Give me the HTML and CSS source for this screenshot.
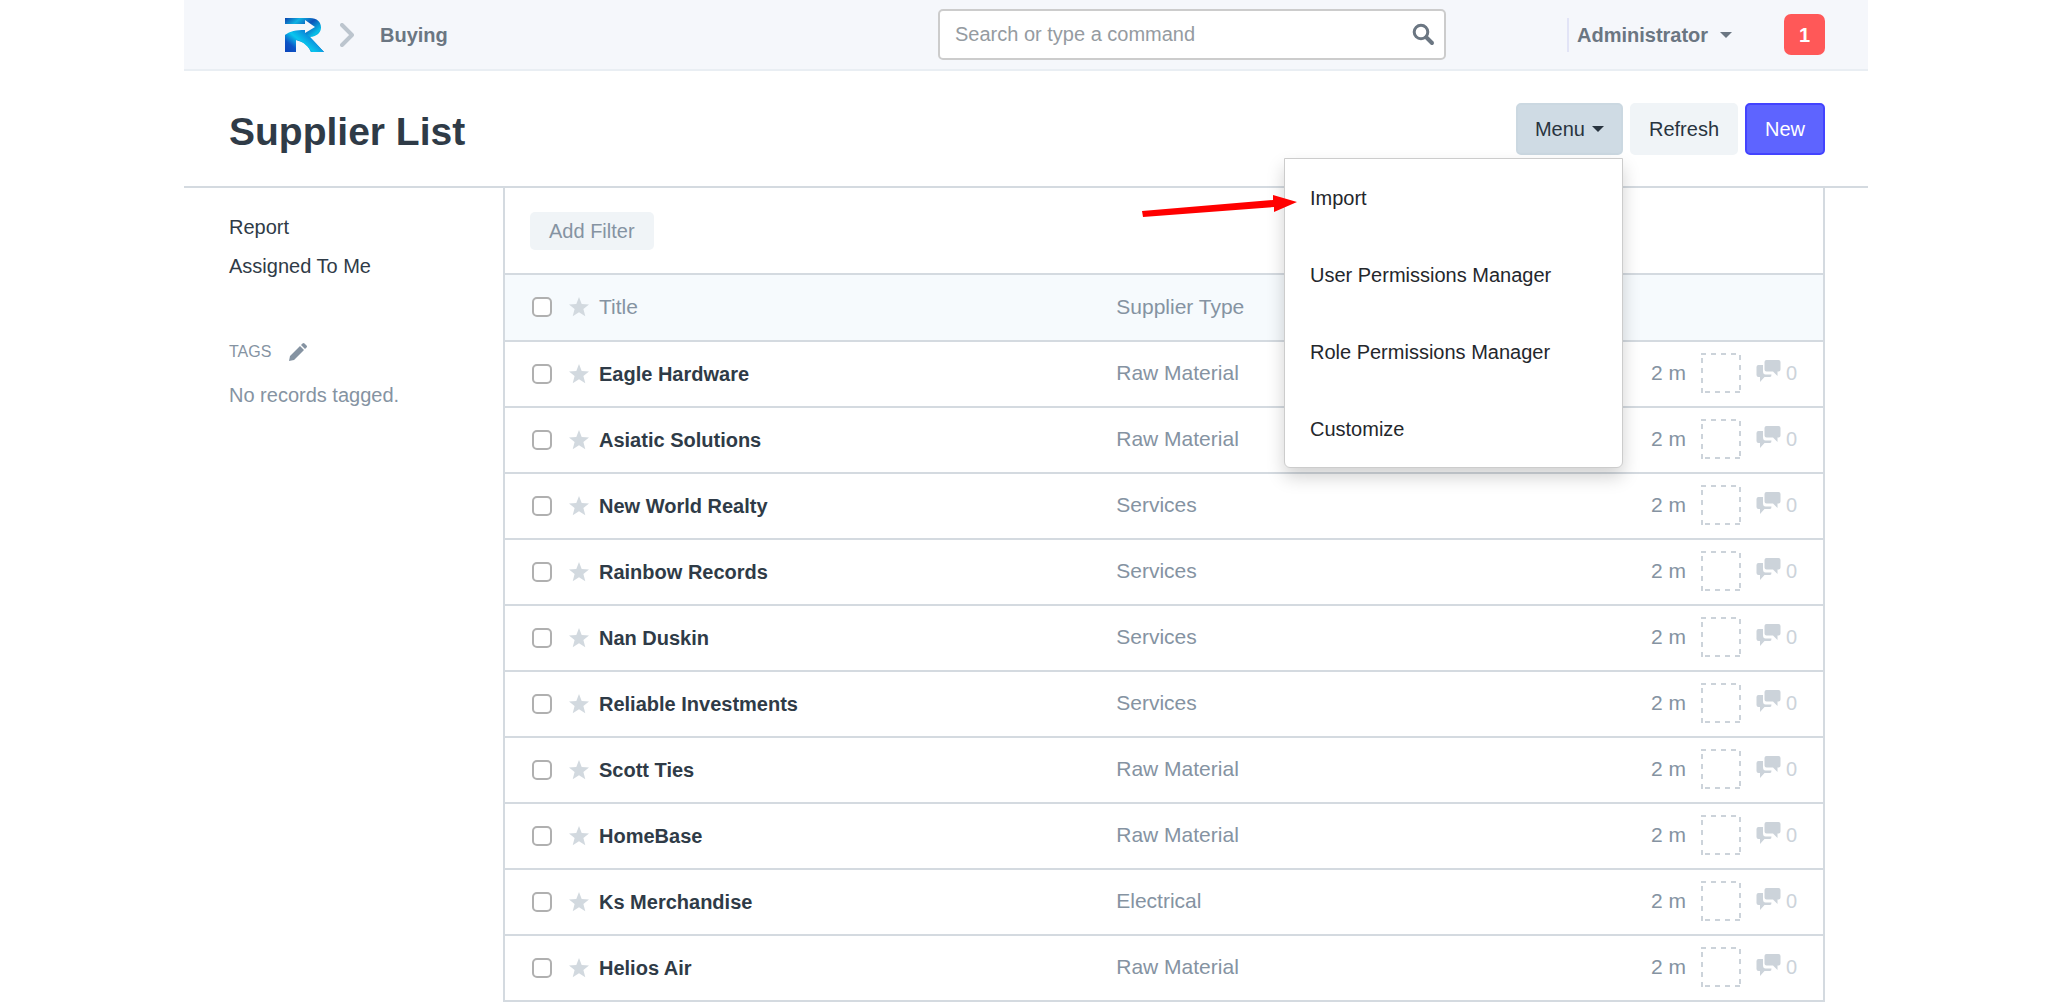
FILE: index.html
```html
<!DOCTYPE html>
<html lang="en">
<head>
<meta charset="utf-8">
<meta name="viewport" content="width=device-width, initial-scale=1">
<title>Supplier List</title>
<link rel="stylesheet" href="styles.css">
</head>
<body>
<svg class="sprite" width="0" height="0" aria-hidden="true">
  <symbol id="star" viewBox="0 0 20 20"><path d="M10 0l2.7 6.9 7.3.5-5.6 4.700 1.900 7.200L10 15.300 3.700 19.300l1.900-7.200L0 7.400l7.300-.5z"/></symbol>
  <symbol id="comments" viewBox="0 0 25 22"><path d="M10.500 0h12q2 0 2 2v7.500q0 2-2 2h-1v4.500L17 11.500h-6.500q-2 0-2-2V2q0-2 2-2z"/><path d="M7 5H2.500Q.5 5 .5 7v8q0 2 2 2h1.500v5L8.500 17H14q1.500 0 1.500-2.500H9.500Q7 14.500 7 11z"/></symbol>
  <symbol id="avatar" viewBox="0 0 40 40"><path d="M0 1h5M10 1h5M20 1h5M30 1h5M4 39h5M14 39h5M24 39h5M34 39h5M1 5v5M1 15v5M1 25v5M1 35v5M39 2v5M39 12v5M39 22v5M39 32v5" fill="none" stroke="currentColor" stroke-width="2"/></symbol>
</svg>
<div class="app">
  <header class="navbar">
    <nav class="crumbs" aria-label="Breadcrumb">
      <a class="logo" href="#" aria-label="Home">
        <svg width="39" height="34" viewBox="0 0 39 34">
          <defs>
            <linearGradient id="bowl" x1="0" y1="0" x2="1" y2="1"><stop offset="0" stop-color="#0b43ae"/><stop offset=".2" stop-color="#0fb2e2"/><stop offset=".4" stop-color="#0b52b8"/><stop offset=".62" stop-color="#07bfe8"/><stop offset="1" stop-color="#0a4cc0"/></linearGradient>
            <linearGradient id="leg" x1="0" y1="1" x2="1" y2=".3"><stop offset="0" stop-color="#0a44bb"/><stop offset=".25" stop-color="#0d55c6"/><stop offset=".5" stop-color="#08c6ee"/><stop offset=".75" stop-color="#0a8fdc"/><stop offset="1" stop-color="#0a62c4"/></linearGradient>
          </defs>
          <path fill="url(#bowl)" d="M0 0h25c7 0 11 4 11 9.500 0 5-4 9-11 9.500L39 34H26c-2-5-7-10-15-12v12H0V17L20 12v3l10-6-10-7v4H0z"/>
          <path fill="url(#leg)" d="M0 17c5-4 11-5 20-5v3c2 2 3 3 5 4l14 15H26c-2-5-7-11-15-12v12H0z"/>
        </svg>
      </a>
      <svg class="chevron" width="14" height="24" viewBox="0 0 14 24" aria-hidden="true"><path d="M2 2l10 10L2 22" fill="none" stroke="currentColor" stroke-width="4" stroke-linecap="round" stroke-linejoin="round"/></svg>
      <a class="nav-link" href="#">Buying</a>
    </nav>
    <form class="search" role="search">
      <input class="search-input" type="text" placeholder="Search or type a command" aria-label="Search or type a command">
      <svg class="search-icon" width="23" height="23" viewBox="0 0 22 23" aria-hidden="true"><circle cx="8.500" cy="9" r="6.800" fill="none" stroke="currentColor" stroke-width="3"/><path d="M14 14.500l5.500 5.500" stroke="currentColor" stroke-width="4" stroke-linecap="round"/></svg>
    </form>
    <div class="account">
      <a class="nav-link user" href="#">Administrator <span class="caret"></span></a>
      <button class="badge" type="button" aria-label="1 notification">1</button>
    </div>
  </header>

  <div class="page-head">
    <h1 class="page-title">Supplier List</h1>
    <div class="actions">
      <div class="menu">
        <button class="btn btn-open" type="button" aria-expanded="true">Menu <span class="caret"></span></button>
        <ul class="dropdown">
          <li><a href="#">Import</a></li>
          <li><a href="#">User Permissions Manager</a></li>
          <li><a href="#">Role Permissions Manager</a></li>
          <li><a href="#">Customize</a></li>
        </ul>
        <svg class="pointer" width="156" height="24" viewBox="0 0 156 24" aria-hidden="true"><path fill="#f00" d="M0 16L131 5V0l24 7-23 10v-5L1 22z"/></svg>
      </div>
      <button class="btn" type="button">Refresh</button>
      <button class="btn btn-primary" type="button">New</button>
    </div>
  </div>

  <div class="page-body">
    <aside class="sidebar">
      <a class="side-link" href="#">Report</a>
      <a class="side-link" href="#">Assigned To Me</a>
      <div class="tags">
        <h2 class="tags-title">TAGS</h2>
        <svg width="18" height="18" viewBox="0 0 18 18" aria-hidden="true"><path d="M0 18l1-5L11 3l4 4L5 17zM12 2l1.500-1.500Q14.500-.5 15.500.5l2 2q1 1 0 2L16 6z"/></svg>
      </div>
      <p class="tags-empty">No records tagged.</p>
    </aside>

    <main class="list">
      <div class="filters"><button class="btn-filter" type="button">Add Filter</button></div>
      <table class="records">
        <thead>
          <tr>
            <th class="col-title" scope="col"><div class="cell"><input class="check" type="checkbox" aria-label="Select all"><svg class="star"><use href="#star"/></svg>Title</div></th>
            <th class="col-type" scope="col">Supplier Type</th>
            <th class="col-meta"></th>
          </tr>
        </thead>
        <tbody>
          <tr><td><label class="cell"><input class="check" type="checkbox"><svg class="star"><use href="#star"/></svg>Eagle Hardware</label></td><td class="col-type">Raw Material</td><td><div class="meta"><span class="age">2 m</span><svg class="avatar"><use href="#avatar"/></svg><svg class="comments"><use href="#comments"/></svg>0</div></td></tr>
          <tr><td><label class="cell"><input class="check" type="checkbox"><svg class="star"><use href="#star"/></svg>Asiatic Solutions</label></td><td class="col-type">Raw Material</td><td><div class="meta"><span class="age">2 m</span><svg class="avatar"><use href="#avatar"/></svg><svg class="comments"><use href="#comments"/></svg>0</div></td></tr>
          <tr><td><label class="cell"><input class="check" type="checkbox"><svg class="star"><use href="#star"/></svg>New World Realty</label></td><td class="col-type">Services</td><td><div class="meta"><span class="age">2 m</span><svg class="avatar"><use href="#avatar"/></svg><svg class="comments"><use href="#comments"/></svg>0</div></td></tr>
          <tr><td><label class="cell"><input class="check" type="checkbox"><svg class="star"><use href="#star"/></svg>Rainbow Records</label></td><td class="col-type">Services</td><td><div class="meta"><span class="age">2 m</span><svg class="avatar"><use href="#avatar"/></svg><svg class="comments"><use href="#comments"/></svg>0</div></td></tr>
          <tr><td><label class="cell"><input class="check" type="checkbox"><svg class="star"><use href="#star"/></svg>Nan Duskin</label></td><td class="col-type">Services</td><td><div class="meta"><span class="age">2 m</span><svg class="avatar"><use href="#avatar"/></svg><svg class="comments"><use href="#comments"/></svg>0</div></td></tr>
          <tr><td><label class="cell"><input class="check" type="checkbox"><svg class="star"><use href="#star"/></svg>Reliable Investments</label></td><td class="col-type">Services</td><td><div class="meta"><span class="age">2 m</span><svg class="avatar"><use href="#avatar"/></svg><svg class="comments"><use href="#comments"/></svg>0</div></td></tr>
          <tr><td><label class="cell"><input class="check" type="checkbox"><svg class="star"><use href="#star"/></svg>Scott Ties</label></td><td class="col-type">Raw Material</td><td><div class="meta"><span class="age">2 m</span><svg class="avatar"><use href="#avatar"/></svg><svg class="comments"><use href="#comments"/></svg>0</div></td></tr>
          <tr><td><label class="cell"><input class="check" type="checkbox"><svg class="star"><use href="#star"/></svg>HomeBase</label></td><td class="col-type">Raw Material</td><td><div class="meta"><span class="age">2 m</span><svg class="avatar"><use href="#avatar"/></svg><svg class="comments"><use href="#comments"/></svg>0</div></td></tr>
          <tr><td><label class="cell"><input class="check" type="checkbox"><svg class="star"><use href="#star"/></svg>Ks Merchandise</label></td><td class="col-type">Electrical</td><td><div class="meta"><span class="age">2 m</span><svg class="avatar"><use href="#avatar"/></svg><svg class="comments"><use href="#comments"/></svg>0</div></td></tr>
          <tr><td><label class="cell"><input class="check" type="checkbox"><svg class="star"><use href="#star"/></svg>Helios Air</label></td><td class="col-type">Raw Material</td><td><div class="meta"><span class="age">2 m</span><svg class="avatar"><use href="#avatar"/></svg><svg class="comments"><use href="#comments"/></svg>0</div></td></tr>
        </tbody>
      </table>
    </main>
  </div>
</div>
</body>
</html>
```

FILE: styles.css
```css
:root {
  --text: #2f3b47;
  --muted: #8593a2;
  --line: #d4dae0;
  --pale: #f0f4f7;
}

* { box-sizing: border-box; }

body {
  margin: 0;
  background: #fff;
  color: var(--text);
  font: 20px/24px "Liberation Sans", Arial, sans-serif;
}

a { color: inherit; text-decoration: none; }
button, input { font: inherit; margin: 0; }
button { cursor: pointer; }
svg { display: block; flex: none; fill: currentColor; }
.sprite { position: absolute; }

.app { max-width: 1684px; margin: 0 auto; }

/* Top bar */
.navbar {
  display: flex;
  align-items: center;
  min-height: 71px;
  padding: 0 43px 0 101px;
  background: #f5f7fb;
  border-bottom: 2px solid #e9eef3;
  color: #6b7682;
}
.crumbs { display: flex; align-items: center; margin-right: auto; }
.chevron { margin: 0 26px 0 16px; color: #bcc5ce; }
.nav-link { font-weight: bold; }

.search { position: relative; flex: 0 1 508px; margin-right: 121px; }
.search-input {
  width: 100%;
  height: 51px;
  padding: 0 50px 0 15px;
  border: 2px solid #ccc;
  border-radius: 5px;
  background: #fff;
  color: var(--text);
}
.search-input::placeholder { color: #959ba1; opacity: 1; }
.search-icon { position: absolute; right: 11px; top: 14px; }

.account { display: flex; align-items: center; justify-content: space-between; flex: 0 0 258px; }
.user {
  display: flex;
  align-items: center;
  gap: 12px;
  height: 34px;
  padding-left: 8px;
  border-left: 2px solid #e2e4f6;
}
.caret { border: 6px solid transparent; border-top-color: currentColor; border-bottom: 0; }
.badge {
  width: 41px;
  height: 41px;
  padding: 0;
  border: 0;
  border-radius: 7px;
  background: #ff5858;
  color: #fff;
  font-weight: bold;
}

/* Page heading */
.page-head {
  display: flex;
  align-items: center;
  justify-content: space-between;
  min-height: 117px;
  padding: 0 43px 0 45px;
  border-bottom: 2px solid var(--line);
}
.page-title { margin: 6px 0 0; font-size: 39px; line-height: 44px; }
.actions { display: flex; gap: 7px; }
.btn {
  display: flex;
  align-items: center;
  justify-content: center;
  gap: 7px;
  min-width: 80px;
  height: 52px;
  padding: 0 17px;
  border: 2px solid var(--pale);
  border-radius: 5px;
  background: var(--pale);
  color: #29343f;
}
.btn-open { border-color: #cbd8e1; background: #cfdbe4; }
.btn-primary { border-color: #4343ff; background: #5e64ff; color: #fff; }

.menu { position: relative; }
.dropdown {
  position: absolute;
  z-index: 1;
  top: 55px;
  right: 0;
  width: 339px;
  margin: 0;
  padding: 0;
  list-style: none;
  border: 1px solid #ccc;
  border-radius: 0 0 6px 6px;
  background: #fff;
  box-shadow: 0 9px 18px rgba(0, 0, 0, .18);
}
.dropdown a { display: block; padding: 27px 25px 26px; color: #24272c; }
.pointer { position: absolute; z-index: 2; top: 92px; right: 325px; }

/* Body */
.page-body { display: flex; align-items: flex-start; padding-right: 43px; }
.sidebar { flex: 0 0 319px; padding: 27px 20px 0 45px; }
.side-link { display: block; margin-bottom: 15px; }
.tags { display: flex; align-items: center; gap: 18px; margin-top: 62px; color: var(--muted); }
.tags-title { margin: 0; font-size: 16px; font-weight: normal; }
.tags-empty { margin: 19px 0 0; color: var(--muted); }

.list { flex: 1; border: 2px solid var(--line); border-top: 0; }
.filters { padding: 24px 25px 23px; }
.btn-filter {
  display: block;
  height: 38px;
  padding: 0 19px;
  border: 0;
  border-radius: 5px;
  background: var(--pale);
  color: var(--muted);
}

.records { width: 100%; border-collapse: separate; border-spacing: 0; table-layout: fixed; }
.records th,
.records td {
  height: 66px;
  padding: 0;
  border-top: 2px solid var(--line);
  text-align: left;
}
.records th { height: 67px; padding-bottom: 2px; background: #f6fafd; font-weight: normal; }
.col-title { width: 46%; }
.col-meta { width: 172px; }
.records .col-type { padding-left: 5px; padding-bottom: 2px; color: var(--muted); font-size: 21px; }

.cell { display: flex; align-items: center; padding-left: 27px; font-weight: bold; }
th .cell { color: var(--muted); font-size: 21px; font-weight: normal; }
.check {
  appearance: none;
  flex: none;
  width: 20px;
  height: 20px;
  margin-right: 17px;
  border: 2px solid #b0b0b0;
  border-radius: 5px;
  background: #fff;
}
.check:checked { background: #5e64ff; }
.star { width: 20px; height: 20px; margin-right: 10px; color: #d2d9df; }

.meta { display: flex; align-items: center; padding-bottom: 2px; color: #ccd3da; }
.age { width: 50px; color: var(--muted); font-size: 21px; }
.avatar { width: 40px; height: 40px; }
.comments { width: 25px; height: 22px; margin: 0 5px 4px 15px; }
```
